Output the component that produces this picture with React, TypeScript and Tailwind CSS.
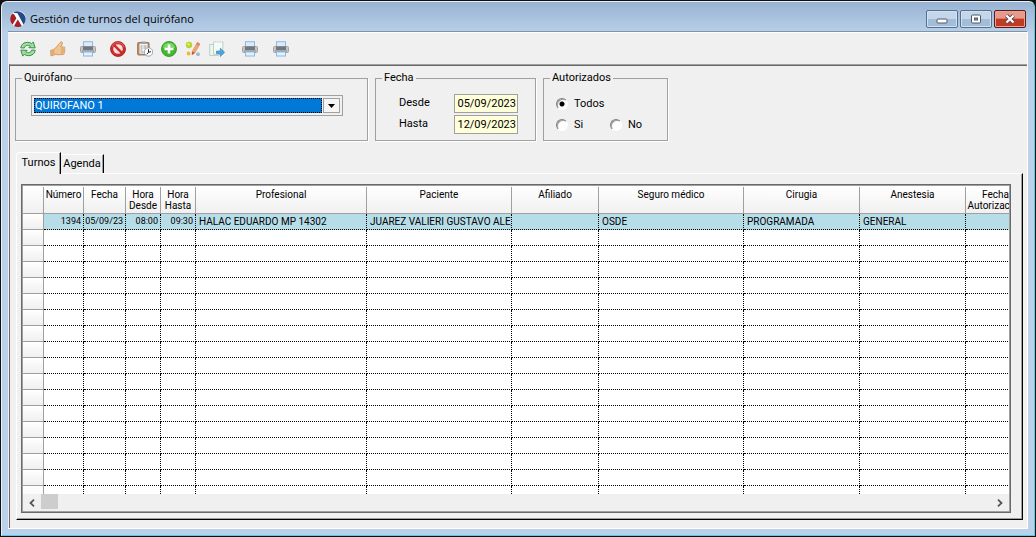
import React, { useState } from "react";

const ICON = "block h-4 w-4";

function RefreshIcon() {
  return (
    <svg viewBox="0 0 16 16" className={ICON} aria-hidden="true">
      <g fill="#9fdc9f" stroke="#2f8a3c" strokeWidth="0.9" strokeLinejoin="round">
        <path d="M.8 6.800C1.200 3.200 4 1.300 7.500 1.300c1.800 0 3 .5 4 1.300L13.300 1l1.900 5.900-6.400-.2 1.600-1.600C8 3.700 5 4.200 4.300 7z" />
        <path d="M15.200 9.200c-.4 3.600-3.200 5.500-6.700 5.500-1.800 0-3-.5-4-1.300L2.700 15 .8 9.100l6.400.2-1.600 1.600c2.400 1.400 5.400.9 6.100-1.900z" />
      </g>
    </svg>
  );
}

function ThumbIcon() {
  return (
    <svg viewBox="0 0 16 16" className={ICON} aria-hidden="true">
      <path
        d="M.6 9.500L4.500 8l4.700-5.200L10.800.8c1.600-.2 1.900 1 1.500 2.200L10.900 6h3.300c1 .3 1 1.500.2 1.900.9.500.8 1.700 0 2 .6.600.400 1.600-.4 1.800.4.700.100 1.600-.8 1.700L9 13.800l-3.500-.4L1 15z"
        fill="#f0c592"
        stroke="#c98f55"
        strokeWidth="0.8"
        strokeLinejoin="round"
      />
      <path d="M11 8h3M11 10h3M10.800 11.800h2.500" stroke="#c4874a" strokeWidth="0.600" />
      <path d="M.8 9.600l3.400-1.200.6 4.600L1 14.600z" fill="#e2ac72" />
    </svg>
  );
}

function PrinterIcon() {
  return (
    <svg viewBox="0 0 16 16" className={ICON} aria-hidden="true">
      <rect x="3.500" y=".7" width="9" height="6" fill="#d9ecfb" stroke="#8db9dd" />
      <rect x=".5" y="5.500" width="15" height="6" rx="1" fill="#c2c5c9" stroke="#a0a3a8" />
      <rect x="3" y="5.500" width="10" height="3.500" fill="#74777e" />
      <path d="M2 10h12" stroke="#85888d" />
      <rect x="3.500" y="11" width="9" height="4" fill="#e2f1fc" stroke="#8db9dd" />
    </svg>
  );
}

function ForbidIcon() {
  return (
    <svg viewBox="0 0 16 16" className={ICON} aria-hidden="true">
      <circle cx="8" cy="8" r="7.500" fill="#cc2b2b" stroke="#a81b1b" strokeWidth=".8" />
      <circle cx="8" cy="8" r="4.800" fill="#f3dcd9" />
      <path d="M4.200 4.200l7.600 7.600" stroke="#cc2b2b" strokeWidth="2.400" />
      <path d="M2 6a6.300 6.300 0 0 1 12 0" fill="none" stroke="#e57468" strokeWidth=".8" />
    </svg>
  );
}

function ClipboardClockIcon() {
  return (
    <svg viewBox="0 0 16 16" className={ICON} aria-hidden="true">
      <rect x=".6" y="1.500" width="11.500" height="12.500" rx="1" fill="#b78e68" stroke="#8a684b" strokeWidth=".8" />
      <rect x="2.500" y="2.700" width="8" height="10" fill="#f7f7f3" />
      <rect x="4" y=".5" width="5" height="2.500" fill="#a0a4a8" />
      <path d="M3.500 5h2M6.500 5h3M3.500 7h2M6.500 7h3M3.500 9h2M3.500 11h3" stroke="#898b8f" strokeWidth=".9" />
      <circle cx="11.500" cy="11" r="4.200" fill="#fff" stroke="#8491a0" strokeWidth=".8" />
      <path d="M11.500 8.200v3l2.500-.5M11.500 11.300l-1.700 2" fill="none" stroke="#222" strokeWidth="1" />
    </svg>
  );
}

function AddIcon() {
  return (
    <svg viewBox="0 0 16 16" className={ICON} aria-hidden="true">
      <circle cx="8" cy="8" r="7.500" fill="#42b82f" stroke="#2a8f20" strokeWidth=".8" />
      <path d="M1.800 6.500a6.400 6.400 0 0 1 12.400 0c-4 1.800-8.400 1.800-12.400 0z" fill="#7ad464" />
      <path d="M8 3.500v9M3.500 8h9" stroke="#fff" strokeWidth="2.600" />
    </svg>
  );
}

function EditIcon() {
  return (
    <svg viewBox="0 0 16 16" className={ICON} aria-hidden="true">
      <circle cx="4" cy="4" r="3.200" fill="#b8d435" />
      <circle cx="3.500" cy="3.200" r="1.200" fill="#dcec84" />
      <circle cx="3.600" cy="12.500" r="1.900" fill="#f6b52e" />
      <circle cx="13" cy="13.200" r="1.900" fill="#9db8dc" />
      <path d="M12.500 1.200l2.400 1.700-5 9-3 1.900.4-3.500z" fill="#f0a868" stroke="#cf7d44" strokeWidth=".5" />
      <path d="M12.500 1.200l2.400 1.700-1.200 2.200-2.500-1.700z" fill="#e47b7b" />
      <path d="M7.300 10.500l2.400 1.500-2.800 1.800z" fill="#b64c34" />
    </svg>
  );
}

function ExportIcon() {
  return (
    <svg viewBox="0 0 16 16" className={ICON} aria-hidden="true">
      <path d="M.7 3.500h8.500v11H.7z" fill="#eef7ef" stroke="#a7c9bf" strokeWidth=".8" />
      <path d="M4.500.8h9.300v12.500H4.500z" fill="#f3faf8" stroke="#a7c9bf" strokeWidth=".8" />
      <path d="M4.500.8h9.300" stroke="#f0f0f0" strokeWidth="1.200" strokeDasharray="1.200 1.200" />
      <path d="M7.500 10h3.800V7.200l4.300 4.100-4.300 4.200V12.700H7.500z" fill="#4fa5dc" stroke="#2d7db5" strokeWidth=".6" />
    </svg>
  );
}

function LogoIcon() {
  return (
    <svg viewBox="0 0 16 16" className={ICON} aria-hidden="true">
      <circle cx="8" cy="8" r="8" fill="#fff" />
      <path d="M3.500 1.500A8 8 0 0 1 13.600 13.700L7.500 2.300 4.500 2z" fill="#254a8c" />
      <path d="M2.400 2.400A8 8 0 0 0 2.500 13.800L6.400 7.200 4.200 3.600z" fill="#a32028" />
      <path d="M4 14.900A8 8 0 0 0 11.800 15L7.800 8.400z" fill="#a32028" />
    </svg>
  );
}

type Tool = { label: string; Icon: () => React.JSX.Element };

const toolGroups: { style: string; tools: Tool[] }[] = [
  {
    style: "flex gap-3.5",
    tools: [
      { label: "Actualizar", Icon: RefreshIcon },
      { label: "Autorizar", Icon: ThumbIcon },
      { label: "Imprimir", Icon: PrinterIcon },
      { label: "Anular", Icon: ForbidIcon },
    ],
  },
  {
    style: "ml-[11px] flex gap-2",
    tools: [
      { label: "Reprogramar", Icon: ClipboardClockIcon },
      { label: "Agregar", Icon: AddIcon },
      { label: "Modificar", Icon: EditIcon },
      { label: "Exportar", Icon: ExportIcon },
    ],
  },
  {
    style: "ml-[17px] flex gap-[15px]",
    tools: [
      { label: "Imprimir turno", Icon: PrinterIcon },
      { label: "Imprimir listado", Icon: PrinterIcon },
    ],
  },
];

const columns = [
  { title: "", width: "w-[21px]" },
  { title: "Número", width: "w-[40px]" },
  { title: "Fecha", width: "w-[42px]" },
  { title: "Hora Desde", width: "w-[35px]" },
  { title: "Hora Hasta", width: "w-[35px]" },
  { title: "Profesional", width: "w-[171px]" },
  { title: "Paciente", width: "w-[145px]" },
  { title: "Afiliado", width: "w-[87px]" },
  { title: "Seguro médico", width: "w-[145px]" },
  { title: "Cirugia", width: "w-[116px]" },
  { title: "Anestesia", width: "w-[106px]" },
  { title: "Fecha Autorización", width: "w-[60px]" },
];

const turno = [
  "1394",
  "05/09/23",
  "08:00",
  "09:30",
  "HALAC EDUARDO MP 14302",
  "JUAREZ VALIERI GUSTAVO ALE",
  "",
  "OSDE",
  "PROGRAMADA",
  "GENERAL",
  "",
];

const emptyRows = Array.from({ length: 16 }, (_, i) => i);

const fieldset = "h-[70px] border border-[#a0a0a0] shadow-[1px_1px_0_#fff]";
const legend = "px-0.5 leading-3.5";
const radio =
  "h-3 w-3 shrink-0 appearance-none rounded-full border border-t-[#808080] border-l-[#808080] border-r-white border-b-white bg-white shadow-[inset_1px_1px_0_#a0a0a0] checked:bg-[radial-gradient(circle,#000_2px,#fff_3px)]";
const dateInput = "h-[19px] w-16 border border-[#a0a0a0] bg-[#ffffd9] pr-px text-right";
const rowHead = "border-r border-b border-[#a0a0a0] bg-linear-to-b from-white to-[#f0f0f0] p-0";
const caption =
  "flex h-[18px] w-8 items-center justify-center rounded-[2px] border border-[#566f8e] bg-linear-to-b from-[#c3d6ea] from-50% to-[#a3bcd8] to-50% shadow-[inset_0_0_0_1px_#d3e2f2]";

export default function App() {
  const [tab, setTab] = useState("Turnos");
  const [auth, setAuth] = useState("Todos");

  return (
    <div className="flex min-h-screen flex-col bg-[#111] p-px font-[Roboto,'Liberation_Sans',sans-serif] text-[11px] leading-3.5 text-black">
      <div className="flex flex-1 flex-col rounded-t-md border border-t-[#e6f0fa] border-r-[#55cbe4] border-b-[#55cbe4] border-l-[#e6f0fa] bg-linear-to-b from-[#98b3d2] to-[#b9d1ea] to-[32px] px-1.5 pb-1.5">
        <header className="flex h-[29px] items-center justify-between pr-0.5">
          <h1 className="flex items-center gap-1 pt-1 pl-0.5 font-['Open_Sans','Noto_Sans',sans-serif] leading-4">
            <LogoIcon />
            Gestión de turnos del quirófano
          </h1>
          <div className="flex gap-0.5 pt-1">
            <button type="button" aria-label="Minimizar" className={caption}>
              <svg viewBox="0 0 12 10" className="h-2.5 w-3">
                <rect x="1" y="5" width="10" height="4" rx="1" fill="#fff" stroke="#505a68" />
              </svg>
            </button>
            <button type="button" aria-label="Maximizar" className={caption}>
              <svg viewBox="0 0 12 10" className="h-2.5 w-3">
                <rect x="1.500" y="1" width="9" height="8" rx="1" fill="#fff" stroke="#505a68" />
                <rect x="4.500" y="4" width="3" height="2" fill="#8aa4c4" stroke="#505a68" />
              </svg>
            </button>
            <button
              type="button"
              aria-label="Cerrar"
              className="flex h-[18px] w-8 items-center justify-center rounded-[2px] border border-[#5d1a1a] bg-linear-to-b from-[#e59a8b] from-45% to-[#bf3b24] to-50% shadow-[inset_0_0_0_1px_#e9a497]"
            >
              <svg viewBox="0 0 12 10" className="h-2.5 w-3">
                <path d="M2.500 1.500l7 7M9.500 1.500l-7 7" stroke="#5b4a50" strokeWidth="4" />
                <path d="M2.500 1.500l7 7M9.500 1.500l-7 7" stroke="#fff" strokeWidth="2.200" />
              </svg>
            </button>
          </div>
        </header>

        <div className="flex flex-1 flex-col border-t border-r border-b border-t-[#8293a8] border-r-white border-b-white bg-[#f0f0f0]">
          <nav aria-label="Herramientas" className="flex h-8 items-center border-t border-white pl-3">
            {toolGroups.map((group) => (
              <div key={group.style} className={group.style}>
                {group.tools.map(({ label, Icon }) => (
                  <button key={label} type="button" title={label} aria-label={label}>
                    <Icon />
                  </button>
                ))}
              </div>
            ))}
          </nav>

          <main className="ml-px flex flex-1 flex-col border-t border-l border-t-[#a0a0a0] border-l-[#696969]">
            <div className="flex flex-1 flex-col border-t border-[#696969] pt-1.25 pr-1 pb-2 pl-1.25">
              <form className="flex items-stretch gap-1.75" onSubmit={(e) => e.preventDefault()}>
                <fieldset className={`${fieldset} w-[353px] px-3.75 pt-2.5`}>
                  <legend className={`${legend} -ml-[9px]`}>Quirófano</legend>
                  <div className="relative flex h-[21px] w-[312px] border border-[#a0a0a0] p-0.5">
                    <select
                      aria-label="Quirófano"
                      className="w-full appearance-none bg-[#0078d7] pl-px leading-3.5 text-white outline-1 -outline-offset-1 outline-dotted outline-black"
                    >
                      <option>QUIROFANO 1</option>
                    </select>
                    <span className="pointer-events-none ml-px flex w-[17px] shrink-0 items-center justify-center border border-[#a0a0a0] bg-[#f5f5f5]">
                      <svg viewBox="0 0 7 4" className="h-1 w-[7px]">
                        <path d="M0 0h7L3.500 4z" />
                      </svg>
                    </span>
                  </div>
                </fieldset>

                <fieldset className={`${fieldset} w-[161px] pt-2.25`}>
                  <legend className={`${legend} ml-1.5`}>Fecha</legend>
                  <div className="grid grid-cols-[55px_64px] gap-y-0.5 pl-[23px]">
                    <label htmlFor="desde" className="pt-0.5">
                      Desde
                    </label>
                    <input id="desde" defaultValue="05/09/2023" className={dateInput} />
                    <label htmlFor="hasta" className="pt-0.5">
                      Hasta
                    </label>
                    <input id="hasta" defaultValue="12/09/2023" className={dateInput} />
                  </div>
                </fieldset>

                <fieldset className={`${fieldset} w-[125px] pt-3`}>
                  <legend className={`${legend} ml-1.5`}>Autorizados</legend>
                  <div className="grid grid-cols-[54px_1fr] gap-y-1.75 pl-3">
                    {["Todos", "Si", "No"].map((v) => (
                      <label
                        key={v}
                        className={v === "Todos" ? "col-span-2 flex items-center gap-1.5" : "flex items-center gap-1.5"}
                      >
                        <input
                          type="radio"
                          name="autorizados"
                          className={radio}
                          checked={auth === v}
                          onChange={() => setAuth(v)}
                        />
                        {v}
                      </label>
                    ))}
                  </div>
                </fieldset>
              </form>

              <div role="tablist" className="mt-2.75 flex items-end pl-px">
                {["Turnos", "Agenda"].map((t) => (
                  <button
                    key={t}
                    type="button"
                    role="tab"
                    aria-selected={tab === t}
                    onClick={() => setTab(t)}
                    className={
                      tab === t
                        ? "relative -mb-px h-[22px] w-[45px] rounded-tl-sm border-t border-r border-l border-t-white border-r-black border-l-white bg-[#f0f0f0] pb-0.5 shadow-[inset_-1px_0_0_#a0a0a0]"
                        : "h-[19px] w-[43px] border-t border-r border-t-white border-r-black shadow-[inset_-1px_0_0_#a0a0a0]"
                    }
                  >
                    {t}
                  </button>
                ))}
              </div>

              <section
                role="tabpanel"
                className="ml-px flex-1 border border-t-white border-r-black border-b-black border-l-white pt-2.5 pr-[11px] pb-1.25 pl-1 shadow-[inset_-1px_-1px_0_#a0a0a0]"
              >
                <div className="border border-[#696969]">
                  <div className="border border-[#a0a0a0] bg-white pt-px">
                    <div className="overflow-hidden">
                      <table className="w-full min-w-[1003px] table-fixed border-separate border-spacing-0 text-[10px] leading-[11px]">
                        <colgroup>
                          {columns.map((c, i) => (
                            <col key={i} className={c.width} />
                          ))}
                        </colgroup>
                        <thead>
                          <tr className="h-[27px]">
                            {columns.map((c, i) => (
                              <th
                                key={i}
                                scope="col"
                                className="border-r border-b border-[#a0a0a0] bg-linear-to-b from-white to-[#f0f0f0] px-0 pt-0.5 pb-0 align-top font-normal"
                              >
                                {c.title}
                              </th>
                            ))}
                          </tr>
                        </thead>
                        <tbody>
                          <tr className="h-4">
                            <th scope="row" aria-label="Fila" className={rowHead} />
                            {turno.map((v, i) => (
                              <td
                                key={i}
                                className={`overflow-hidden border-r border-b border-dotted border-black bg-[#b7dde8] py-0 whitespace-nowrap ${
                                  i < 4 ? "pr-0.5 pl-0 text-right text-[9px]" : "pr-0 pl-[3px]"
                                }`}
                              >
                                {v}
                              </td>
                            ))}
                          </tr>
                          {emptyRows.map((r) => (
                            <tr key={r} className="h-4">
                              <td className={rowHead} />
                              {turno.map((_, i) => (
                                <td key={i} className="border-r border-b border-dotted border-black p-0" />
                              ))}
                            </tr>
                          ))}
                          <tr className="h-2">
                            <td className="border-r border-[#a0a0a0] bg-[#fcfcfc] p-0" />
                            {turno.map((_, i) => (
                              <td key={i} className="border-r border-dotted border-black p-0" />
                            ))}
                          </tr>
                        </tbody>
                      </table>
                    </div>
                    <div className="flex h-[17px] items-stretch bg-[#f0f0f0]">
                      <button
                        type="button"
                        aria-label="Desplazar a la izquierda"
                        className="flex w-[18px] items-center justify-center"
                      >
                        <svg viewBox="0 0 6 8" className="h-2 w-1.5">
                          <path d="M5 .7L1.500 4 5 7.300" fill="none" stroke="#555" strokeWidth="1.800" />
                        </svg>
                      </button>
                      <span className="mb-0.5 w-[17px] bg-[#cdcdcd]" />
                      <button
                        type="button"
                        aria-label="Desplazar a la derecha"
                        className="ml-auto flex w-[18px] items-center justify-center"
                      >
                        <svg viewBox="0 0 6 8" className="h-2 w-1.5">
                          <path d="M1 .7L4.500 4 1 7.300" fill="none" stroke="#555" strokeWidth="1.800" />
                        </svg>
                      </button>
                    </div>
                  </div>
                </div>
              </section>
            </div>
          </main>
        </div>
      </div>
    </div>
  );
}
